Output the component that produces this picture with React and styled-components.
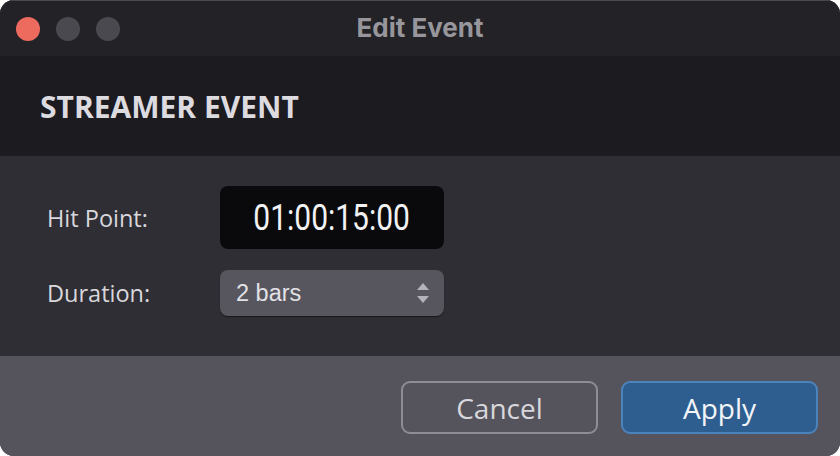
import React from "react";
import styled, { createGlobalStyle } from "styled-components";

const Global = createGlobalStyle`
  html, body { margin: 0; padding: 0; background: #ffffff; }
  body { font-family: "Open Sans", "Noto Sans", sans-serif; }
  * { box-sizing: border-box; }
`;

const Window = styled.div`
  width: 840px;
  height: 456px;
  border-radius: 14px;
  overflow: hidden;
  display: flex;
  flex-direction: column;
  background: #2f2e34;
`;

const TitleBar = styled.div`
  height: 56px;
  background: #232227;
  display: flex;
  align-items: center;
  position: relative;
  padding-left: 16px;
  gap: 16px;
  border-top: 1px solid #4a494f;
`;

const Light = styled.span`
  width: 24px;
  height: 24px;
  border-radius: 50%;
  background: ${(p) => p.$color};
`;

const Title = styled.div`
  position: absolute;
  left: 0;
  right: 0;
  top: 11px;
  text-align: center;
  font-family: "Inter", "Noto Sans", sans-serif;
  font-weight: 700;
  font-size: 26px;
  line-height: 32px;
  color: #97969c;
  pointer-events: none;
`;

const Header = styled.div`
  height: 100px;
  background: #1c1b1f;
  display: flex;
  align-items: center;
  padding-left: 40px;
  font-family: "Open Sans", "Noto Sans", sans-serif;
  font-weight: 700;
  font-size: 30px;
  color: #dcdbe0;
  letter-spacing: 0px;
`;

const Content = styled.div`
  flex: 1;
  background: #2f2e34;
  display: grid;
  grid-template-columns: 173px 224px;
  grid-auto-rows: auto;
  row-gap: 21px;
  align-content: start;
  align-items: center;
  padding: 30px 0 0 47px;
`;

const Label = styled.div`
  font-family: "Open Sans", "Noto Sans", sans-serif;
  font-size: 23.5px;
  color: #d8d7dc;
`;

const Timecode = styled.div`
  height: 63px;
  border-radius: 8px;
  background: #0a0a0c;
  display: flex;
  align-items: center;
  justify-content: center;
  color: #f2f2f4;
  font-family: "Roboto", sans-serif;
  font-size: 37px;
  span {
    display: inline-block;
    transform: scaleX(0.81);
  }
`;

const Select = styled.div`
  height: 46px;
  border-radius: 8px;
  background: #57565e;
  box-shadow: 0 1px 1px rgba(0, 0, 0, 0.5);
  display: flex;
  align-items: center;
  justify-content: space-between;
  padding: 0 14px 0 16px;
  font-family: "Liberation Sans", Arial, sans-serif;
  font-size: 23.5px;
  color: #e2e1e6;
`;

const Footer = styled.div`
  height: 100px;
  background: #55545c;
  display: flex;
  align-items: center;
  justify-content: flex-end;
  gap: 23px;
  padding: 2px 22px 0 0;
`;

const Button = styled.div`
  width: 197px;
  height: 53px;
  border-radius: 9px;
  display: flex;
  align-items: center;
  justify-content: center;
  font-family: "Open Sans", "Noto Sans", sans-serif;
  font-size: 28px;
  padding-top: 2px;
  color: ${(p) => (p.$primary ? "#f2f4f8" : "#d8d7dc")};
  background: ${(p) => (p.$primary ? "#2e5e8f" : "transparent")};
  border: 2px solid ${(p) => (p.$primary ? "#4b83bd" : "#8e8d93")};
`;

function Stepper() {
  return (
    <svg width="14" height="26" viewBox="0 0 14 26">
      <path d="M7 3 L13 10 L1 10 Z" fill="#b4b3b9" />
      <path d="M7 23 L13 16 L1 16 Z" fill="#b4b3b9" />
    </svg>
  );
}

export default function App() {
  return (
    <>
      <Global />
      <Window>
        <TitleBar>
          <Light $color="#ec6a5e" />
          <Light $color="#4a494f" />
          <Light $color="#4a494f" />
          <Title>Edit Event</Title>
        </TitleBar>
        <Header>STREAMER EVENT</Header>
        <Content>
          <Label>Hit Point:</Label>
          <Timecode>
            <span>01:00:15:00</span>
          </Timecode>
          <Label>Duration:</Label>
          <Select>
            <span>2 bars</span>
            <Stepper />
          </Select>
        </Content>
        <Footer>
          <Button>Cancel</Button>
          <Button $primary>Apply</Button>
        </Footer>
      </Window>
    </>
  );
}
